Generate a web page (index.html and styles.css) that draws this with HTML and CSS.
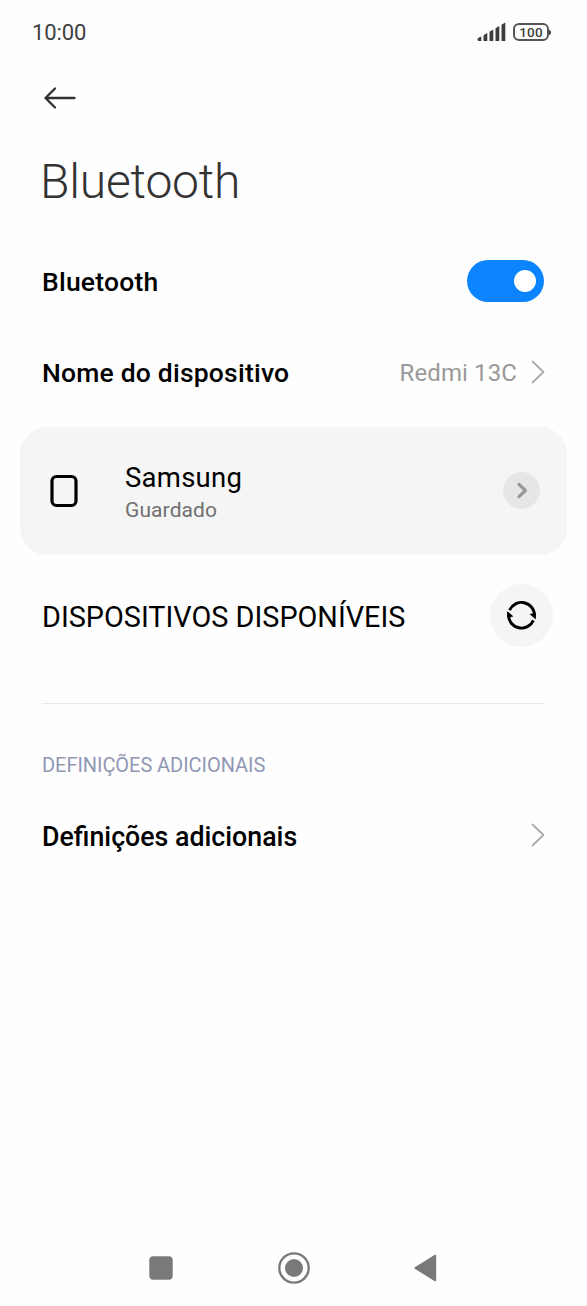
FILE: index.html
```html
<!DOCTYPE html>
<html lang="pt">
<head>
<meta charset="utf-8">
<title>Bluetooth</title>
<link rel="stylesheet" href="styles.css">
</head>
<body>
<div class="screen">
  <header class="status">
    <span class="clock">10:00</span>
    <span class="indicators">
      <svg class="signal" width="30" height="20" viewBox="0 0 30 20">
        <path d="M.5 17.500Q.5 16 2 15.500l2.300-1V19H2q-1.500 0-1.500-1.500zM6.500 14q0-1 1-1.500l2.800-1.500v8H6.500zM12.500 10.500q0-.8.8-1.200l3-1.800V19h-3.800zM18.500 7q0-.8.8-1.200l3-1.800v15h-3.800zM24.500 3.500q0-.8.8-1.200l3-1.800V19h-3.800z"/>
      </svg>
      <span class="battery">100</span>
    </span>
  </header>
  <div class="toolbar">
    <svg class="back" width="32" height="22" viewBox="0 0 32 22"><path d="M30.500 11H1.800M11 1.500L1.500 11l9.500 9.500"/></svg>
  </div>
  <h1 class="title">Bluetooth</h1>
  <main>
    <div class="row">
      <span class="label">Bluetooth</span>
      <span class="toggle"><span class="knob"></span></span>
    </div>
    <div class="row">
      <span class="label">Nome do dispositivo</span>
      <span class="value">Redmi 13C</span>
      <svg class="chevron" width="14" height="24" viewBox="0 0 14 24"><path d="M1.500 1.500L12.500 12l-11 10.500"/></svg>
    </div>
    <div class="card">
      <svg class="device" width="28" height="34" viewBox="0 0 28 34"><rect x="2" y="2.500" width="24" height="29" rx="4.500"/></svg>
      <div class="device-text">
        <span class="device-name">Samsung</span>
        <span class="device-state">Guardado</span>
      </div>
      <span class="details"><svg width="12" height="17" viewBox="0 0 12 17"><path d="M3 2.300L9.400 8.500 3 14.700"/></svg></span>
    </div>
    <div class="available">
      <h2 class="available-title">DISPOSITIVOS DISPONÍVEIS</h2>
      <span class="refresh">
        <svg width="32" height="30" viewBox="0 0 32 30">
          <path class="arc" d="M3.600 9.200A13 13 0 0 1 28.500 14.500M27.400 19.300A13 13 0 0 1 2.500 14"/>
          <path d="M23.500 13l3.700-.8 2.700-.3 0 6.300-1.200-.6zM7.500 15.500l-3.700.8-2.700.3 0-6.300 1.200.6z"/>
        </svg>
      </span>
    </div>
    <hr class="divider">
    <h3 class="section">DEFINIÇÕES ADICIONAIS</h3>
    <div class="row row-more">
      <span class="label label-more">Definições adicionais</span>
      <svg class="chevron" width="14" height="24" viewBox="0 0 14 24"><path d="M1.500 1.500L12.500 12l-11 10.500"/></svg>
    </div>
  </main>
  <nav class="nav">
    <svg width="24" height="24" viewBox="0 0 24 24"><rect x=".3" y=".3" width="23.400" height="23.400" rx="4"/></svg>
    <svg width="32" height="32" viewBox="0 0 32 32"><circle class="ring" cx="16" cy="16" r="14.700"/><circle cx="16" cy="16" r="9"/></svg>
    <svg width="24" height="28" viewBox="0 0 24 28"><path d="M.8 13.200L20.500 1q1.700-.8 1.700 1v24q0 1.800-1.700 1L.8 14.800q-1-.8 0-1.600z"/></svg>
  </nav>
</div>
</body>
</html>
```

FILE: styles.css
```css
* { box-sizing: border-box; margin: 0; padding: 0; }
body { background: #fefefe; font-family: Roboto, "Noto Sans", sans-serif; color: #000; }
svg { display: block; flex: none; }
.screen { width: 587px; height: 1306px; display: flex; flex-direction: column; }
.status { height: 64px; padding: 0 38px 0 32px; display: flex; align-items: center; justify-content: space-between; color: #404040; }
.clock { font-size: 22px; font-weight: 450; line-height: 26px; padding-top: 1px; letter-spacing: -.1px; }
.indicators { display: flex; align-items: center; gap: 6px; }
.signal { fill: #3c3c3c; }
.battery { position: relative; width: 36px; height: 18px; border: 2px solid #555; border-radius: 6px; font-size: 13.500px; font-weight: 500; line-height: 15px; text-align: center; letter-spacing: .2px; margin-bottom: 1px; }
.battery::after { content: ""; position: absolute; right: -4px; top: 5px; width: 2px; height: 5px; background: #4a4a4a; border-radius: 0 2px 2px 0; }
.toolbar { height: 68px; padding-left: 44px; display: flex; align-items: center; }
.back { fill: none; stroke: #303030; stroke-width: 2.300; stroke-linecap: round; stroke-linejoin: round; }
.title { height: 104px; padding-left: 40px; font-size: 48px; font-weight: 300; line-height: 99px; color: #333; letter-spacing: -.2px; }
.row { height: 91px; padding: 0 42px 0 42px; display: flex; align-items: center; }
.label { flex: 1; font-size: 26.500px; font-weight: 500; line-height: 30px; letter-spacing: .2px; }
.label-more { font-size: 26.750px; letter-spacing: normal; padding-top: 2px; }
.toggle { width: 77px; height: 42px; border-radius: 21px; background: #0d84ff; padding: 0 8px; margin: 0 1px 1px 0; display: flex; align-items: center; justify-content: flex-end; }
.knob { width: 22px; height: 22px; border-radius: 50%; background: #fff; }
.value { font-size: 24px; line-height: 28px; color: #999; margin-right: 14px; letter-spacing: .1px; }
.chevron { fill: none; stroke: #aaa; stroke-width: 1.800; stroke-linecap: round; stroke-linejoin: round; margin-bottom: 2px; }
.card { height: 128px; margin: 9px 20px 29px; padding: 0 27px 0 30px; border-radius: 27px; background: #f5f5f5; display: flex; align-items: center; }
.device { fill: none; stroke: #000; stroke-width: 3.200; }
.device-text { flex: 1; margin-left: 47px; padding-top: 4px; display: flex; flex-direction: column; }
.device-name { font-size: 27.500px; line-height: 35px; letter-spacing: .25px; }
.device-state { font-size: 21px; line-height: 31px; color: #707070; letter-spacing: .1px; }
.details { width: 37px; height: 37px; border-radius: 50%; background: #e6e6e6; display: flex; align-items: center; justify-content: center; margin-bottom: 2px; }
.details svg { fill: none; stroke: #999; stroke-width: 3.200; stroke-linecap: round; stroke-linejoin: round; }
.available { height: 63px; padding: 0 34px 0 42px; display: flex; align-items: center; justify-content: space-between; }
.available-title { font-size: 28.800px; font-weight: 400; line-height: 34px; padding-top: 3px; }
.refresh { width: 63px; height: 63px; border-radius: 50%; background: #f5f5f5; display: flex; align-items: center; justify-content: center; }
.arc { fill: none; stroke: #000; stroke-width: 2.900; }
.divider { border: 0; height: 1px; margin: 56px 42px 0; background: #e8e8e8; }
.section { margin: 47px 0 0 42px; font-size: 20px; font-weight: 400; line-height: 28px; color: #9198b4; letter-spacing: -.05px; }
.row-more { margin-top: 11px; }
.nav { margin-top: auto; height: 76px; padding: 0 149px; display: flex; align-items: center; justify-content: space-between; fill: #797979; }
.ring { fill: none; stroke: #797979; stroke-width: 2.300; }
```
